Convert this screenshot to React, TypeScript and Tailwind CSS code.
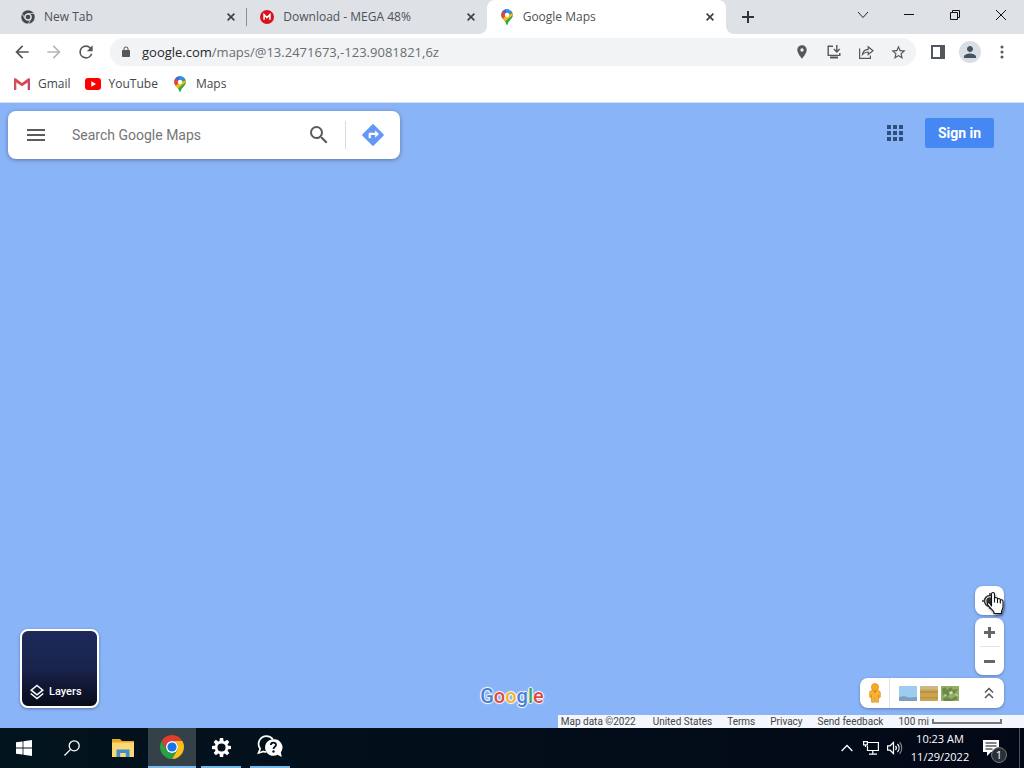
import React, { useId } from "react";

function Glyph({ d, className }: { d: string; className: string }) {
  return (
    <svg viewBox="0 0 24 24" className={className} fill="currentColor" aria-hidden="true">
      <path d={d} />
    </svg>
  );
}

const BACK = "M20 11H7.83l5.59-5.59L12 4l-8 8 8 8 1.41-1.41L7.83 13H20v-2z";
const FORWARD = "M12 4l-1.41 1.41L16.17 11H4v2h12.17l-5.58 5.59L12 20l8-8z";
const RELOAD =
  "M17.65 6.35A7.958 7.958 0 0 0 12 4a8 8 0 1 0 7.73 10h-2.08A6 6 0 1 1 12 6c1.66 0 3.14.69 4.22 1.78L13 11h7V4l-2.35 2.35z";
const LOCK =
  "M18 8h-1V6c0-2.76-2.24-5-5-5S7 3.24 7 6v2H6c-1.1 0-2 .9-2 2v10c0 1.1.9 2 2 2h12c1.1 0 2-.9 2-2V10c0-1.1-.9-2-2-2zm-2.9 0H8.9V6c0-1.71 1.39-3.1 3.1-3.1s3.1 1.39 3.1 3.1v2z";
const PLACE =
  "M12 2C8.13 2 5 5.13 5 9c0 5.25 7 13 7 13s7-7.75 7-13c0-3.87-3.13-7-7-7zm0 9.5a2.5 2.5 0 1 1 0-5 2.5 2.5 0 0 1 0 5z";
const STAR =
  "M22 9.24l-7.19-.62L12 2 9.19 8.63 2 9.24l5.46 4.73L5.82 21 12 17.27 18.18 21l-1.63-7.03L22 9.24zM12 15.4l-3.76 2.27 1-4.28-3.32-2.88 4.38-.38L12 6.1l1.71 4.04 4.38.38-3.32 2.88 1 4.28L12 15.4z";
const PERSON =
  "M12 12c2.21 0 4-1.79 4-4s-1.79-4-4-4-4 1.79-4 4 1.79 4 4 4zm0 2c-2.67 0-8 1.34-8 4v2h16v-2c0-2.66-5.33-4-8-4z";
const SEARCH =
  "M15.5 14h-.79l-.28-.27A6.471 6.471 0 0 0 16 9.5 6.5 6.5 0 1 0 9.5 16c1.61 0 3.09-.59 4.23-1.57l.27.28v.79l5 4.99L20.49 19l-4.99-5zm-6 0C7.01 14 5 11.99 5 9.5S7.01 5 9.5 5 14 7.01 14 9.5 11.99 14 9.5 14z";
const DIRECTIONS =
  "M21.71 11.29l-9-9a1 1 0 0 0-1.41 0l-9 9a1 1 0 0 0 0 1.41l9 9a1 1 0 0 0 1.41 0l9-9a1 1 0 0 0 0-1.41zM14 14.5V12h-4v3H8v-4c0-.55.45-1 1-1h5V7.5l3.5 3.5-3.5 3.5z";

const RED_ARC = "M12 6 L22.39 6 A12 12 0 0 0 1.61 6 L6.8 15 A6 6 0 0 1 12 6Z";
const YELLOW_ARC = "M17.2 15 L12 24 A12 12 0 0 0 22.39 6 L12 6 A6 6 0 0 1 17.2 15Z";
const GREEN_ARC = "M6.8 15 L1.61 6 A12 12 0 0 0 12 24 L17.2 15 A6 6 0 0 1 6.8 15Z";

function ChromeMono() {
  return (
    <svg viewBox="0 0 24 24" className="size-3.5 shrink-0" aria-hidden="true">
      <g fill="#43474b" stroke="#dee1e6" strokeWidth="1">
        <path d={RED_ARC} />
        <path d={YELLOW_ARC} />
        <path d={GREEN_ARC} />
      </g>
      <circle cx="12" cy="12" r="5.6" fill="#dee1e6" />
      <circle cx="12" cy="12" r="4" fill="#43474b" />
    </svg>
  );
}

function ChromeColor() {
  return (
    <svg viewBox="0 0 24 24" className="size-6" aria-hidden="true">
      <path d={RED_ARC} fill="#e33b2e" />
      <path d={YELLOW_ARC} fill="#fbc116" />
      <path d={GREEN_ARC} fill="#2c9f45" />
      <circle cx="12" cy="12" r="6" fill="#fff" />
      <circle cx="12" cy="12" r="4.6" fill="#1a73e8" />
    </svg>
  );
}

function MapsPin() {
  const id = useId();
  return (
    <svg viewBox="0 0 24 24" className="size-4 shrink-0" aria-hidden="true">
      <clipPath id={id}>
        <path d="M12 .5C7 .5 3.4 4.3 3.4 9c0 5.6 6.2 7.6 7.6 13.6.2 1.2 1.8 1.2 2 0C14.4 16.600 20.600 14.6 20.6 9 20.6 4.3 17 .5 12 .5z" />
      </clipPath>
      <g clipPath={`url(#${id})`}>
        <rect width="24" height="24" fill="#34a853" />
        <path d="M0 19L12 9 20.500-1H24V6L7.500 20z" fill="#fbbc04" />
        <path d="M12 9L20-1 26 4 24 14 14 24H9L24 6z" fill="#34a853" />
        <path d="M12 9L20-1H8z" fill="#4285f4" />
        <path d="M4 2.600L12 9 9-1z" fill="#1a73e8" />
        <path d="M4.800 2.500L12 9 3.500 16 0 8z" fill="#ea4335" />
        <path d="M12 9L18 1.500 20 5z" fill="#4285f4" />
      </g>
      <circle cx="12" cy="9" r="3.3" fill="#fff" />
    </svg>
  );
}

function MegaIcon() {
  return (
    <svg viewBox="0 0 24 24" className="size-3.5 shrink-0" aria-hidden="true">
      <circle cx="12" cy="12" r="12" fill="#d9131c" />
      <path d="M7 16.500V8l5 5 5-5v8.500" fill="none" stroke="#fff" strokeWidth="2.6" />
    </svg>
  );
}

function GmailIcon() {
  return (
    <svg viewBox="0 0 24 18" className="h-3 w-4" aria-hidden="true">
      <path d="M0 2.500V18h3.500V7z" fill="#c75460" />
      <path d="M24 2.500V18h-3.500V7z" fill="#b64e72" />
      <path d="M0 2C0 0 2 0 3.500 1L12 7.500 20.500 1C22 0 24 0 24 2v2.500L12 12.500 0 4.500z" fill="#d64a50" />
    </svg>
  );
}

function YouTubeIcon() {
  return (
    <svg viewBox="0 0 24 18" className="h-3 w-4" aria-hidden="true">
      <rect width="24" height="18" rx="4.500" fill="#f00" />
      <path d="M9.500 5v8l7-4z" fill="#fff" />
    </svg>
  );
}

function CloseMark() {
  return (
    <svg viewBox="0 0 8 8" className="size-2" fill="none" stroke="#3c4043" strokeWidth="1.6" aria-hidden="true">
      <path d="M.6.6l6.800 6.800M7.400.6L.6 7.400" />
    </svg>
  );
}

function Tab({ title, icon, active, divider }: { title: string; icon: React.ReactNode; active?: boolean; divider?: boolean }) {
  return (
    <div
      className={
        active
          ? "relative flex h-full min-w-0 flex-1 items-center gap-2 rounded-t-lg bg-white pr-[11px] pl-3"
          : "relative flex h-full min-w-0 flex-1 items-center gap-2 pr-[11px] pl-3"
      }
    >
      <button
        type="button"
        role="tab"
        aria-selected={!!active}
        className={active ? "flex min-w-0 flex-1 items-center gap-2 text-left" : "flex min-w-0 flex-1 items-center gap-[9px] pl-px text-left"}
      >
        {icon}
        <span className="truncate text-[12px] leading-4 text-[#4e5256]">{title}</span>
      </button>
      <button type="button" aria-label={`Close ${title}`} className="p-px">
        <CloseMark />
      </button>
      {divider && <span className="absolute top-2 right-0 h-[18px] w-px bg-[#8a8d91]" />}
      {active && (
        <>
          <span className="absolute bottom-0 -left-2 size-2 bg-white">
            <span className="block size-full rounded-br-lg bg-[#dee1e6]" />
          </span>
          <span className="absolute -right-2 bottom-0 size-2 bg-white">
            <span className="block size-full rounded-bl-lg bg-[#dee1e6]" />
          </span>
        </>
      )}
    </div>
  );
}

function TabStrip() {
  const win = "flex h-[30px] w-[46px] items-center justify-center";
  return (
    <header className="flex h-[34px] bg-[#dee1e6]">
      <div role="tablist" className="flex w-[726px] min-w-0 pl-2">
        <Tab title="New Tab" icon={<ChromeMono />} divider />
        <Tab title="Download - MEGA 48%" icon={<MegaIcon />} />
        <Tab title="Google Maps" icon={<MapsPin />} active />
      </div>
      <button type="button" aria-label="New tab" className="flex w-11 items-center justify-center">
        <svg viewBox="0 0 12 12" className="size-3" stroke="#303438" strokeWidth="2" aria-hidden="true">
          <path d="M6 0v12M0 6h12" />
        </svg>
      </button>
      <div className="ml-auto flex">
        <button type="button" aria-label="Search tabs" className={win}>
          <svg viewBox="0 0 12 12" className="size-3" fill="none" stroke="#222" aria-hidden="true">
            <path d="M1 3l5 5.500L11 3" />
          </svg>
        </button>
        <button type="button" aria-label="Minimize" className={win}>
          <svg viewBox="0 0 10 10" className="size-2.5" aria-hidden="true">
            <path d="M0 4h10v1H0z" fill="#111" />
          </svg>
        </button>
        <button type="button" aria-label="Restore" className={win}>
          <svg viewBox="0 0 10 10" className="size-2.5" fill="none" stroke="#111" aria-hidden="true">
            <path d="M.5 2.500h7v7h-7zM2.500 2.500v-2h7v7h-2" />
          </svg>
        </button>
        <button type="button" aria-label="Close" className={win}>
          <svg viewBox="0 0 10 10" className="size-2.5" stroke="#111" aria-hidden="true">
            <path d="M0 0l10 10M10 0L0 10" />
          </svg>
        </button>
      </div>
    </header>
  );
}

function ToolButton({ label, children }: { label: string; children: React.ReactNode }) {
  return (
    <button type="button" aria-label={label} className="flex h-7 w-8 shrink-0 items-center justify-center text-[#54585c]">
      {children}
    </button>
  );
}

function Toolbar() {
  return (
    <div className="flex h-9 items-center bg-white pr-1.5 pl-1.5">
      <ToolButton label="Back"><Glyph d={BACK} className="size-5" /></ToolButton>
      <button type="button" aria-label="Forward" disabled className="flex h-7 w-8 items-center justify-center text-[#b5b7ba]">
        <Glyph d={FORWARD} className="size-5" />
      </button>
      <ToolButton label="Reload"><Glyph d={RELOAD} className="size-5" /></ToolButton>
      <div className="ml-2 flex h-7 flex-1 items-center rounded-full bg-[#f1f3f4] pr-0.5 pl-2.5">
        <Glyph d={LOCK} className="size-3 text-[#54585c]" />
        <div
          role="textbox"
          aria-label="Address"
          tabIndex={0}
          className="ml-2.5 min-w-0 flex-1 truncate text-[13px] leading-5 text-[#6a6e72]"
        >
          <span className="text-[#26292c]">google.com</span>/maps/@13.2471673,-123.9081821,6z
        </div>
        <ToolButton label="Location"><Glyph d={PLACE} className="size-4" /></ToolButton>
        <ToolButton label="Install">
          <svg viewBox="0 0 16 16" className="size-4" fill="none" stroke="currentColor" strokeWidth="1.4" aria-hidden="true">
            <path d="M7 2.200H2.200v9.200h11.600V9M10.800 1v6.500M7.900 5l2.900 2.900L13.700 5" />
            <path d="M4 13.500h8" strokeWidth="2" />
          </svg>
        </ToolButton>
        <ToolButton label="Share">
          <svg viewBox="0 0 16 16" className="size-4" fill="none" stroke="currentColor" strokeWidth="1.2" aria-hidden="true">
            <path d="M1.600 4.500v9.900h10.800v-3M4.500 10.500c.5-3.500 2.500-5 5.700-5.200V2.800L15 6.700l-4.800 3.800V8c-2.500 0-4.200.6-5.700 2.500z" />
          </svg>
        </ToolButton>
        <ToolButton label="Bookmark"><Glyph d={STAR} className="size-[17px]" /></ToolButton>
      </div>
      <div className="ml-1.5 flex">
        <ToolButton label="Side panel">
          <svg viewBox="0 0 14 14" className="size-3.5" aria-hidden="true">
            <path d="M0 0h14v14H0zM2 2v10h7V2z" fill="currentColor" fillRule="evenodd" />
          </svg>
        </ToolButton>
        <ToolButton label="Profile">
          <span className="flex size-[22px] items-center justify-center rounded-full bg-[#d9dee4] text-[#46535f]">
            <Glyph d={PERSON} className="size-[18px]" />
          </span>
        </ToolButton>
        <ToolButton label="Menu">
          <svg viewBox="0 0 4 14" className="h-3.5 w-1" fill="currentColor" aria-hidden="true">
            <circle cx="2" cy="2" r="1.500" /><circle cx="2" cy="7" r="1.500" /><circle cx="2" cy="12" r="1.500" />
          </svg>
        </ToolButton>
      </div>
    </div>
  );
}

function Bookmarks() {
  const link = "flex items-center gap-2 text-[12px] leading-4 text-[#44484c]";
  return (
    <nav aria-label="Bookmarks" className="flex h-[33px] items-start gap-[14px] border-b border-[#d5e0f5] bg-white px-3.5 pt-1.5">
      <a href="#gmail" className={link}><GmailIcon />Gmail</a>
      <a href="#youtube" className={link}><YouTubeIcon />YouTube</a>
      <a href="#maps" className={link}><MapsPin />Maps</a>
    </nav>
  );
}

function SearchCard() {
  return (
    <form className="flex h-12 w-[392px] items-center rounded-lg bg-white shadow-[0_1px_4px_rgba(0,0,0,0.35)]" onSubmit={(e) => e.preventDefault()}>
      <button type="button" aria-label="Menu" className="flex w-14 justify-center">
        <svg viewBox="0 0 18 12" className="h-3 w-[18px]" fill="#5c5c5c" aria-hidden="true">
          <path d="M0 0h18v2H0zM0 5h18v2H0zM0 10h18v2H0z" />
        </svg>
      </button>
      <input
        type="text"
        aria-label="Search Google Maps"
        placeholder="Search Google Maps"
        className="ml-2 min-w-0 flex-1 bg-transparent text-[14px] leading-5 text-[#333] outline-none placeholder:text-[#757575]"
      />
      <button type="submit" aria-label="Search" className="flex w-[52px] justify-center">
        <Glyph d={SEARCH} className="size-6 text-[#5a5a5a]" />
      </button>
      <span className="h-7 w-px bg-[#dadce0]" />
      <button type="button" aria-label="Directions" className="flex w-[54px] justify-center text-[#6497f6]">
        <Glyph d={DIRECTIONS} className="size-[26px]" />
      </button>
    </form>
  );
}

function Pegman() {
  return (
    <svg viewBox="0 0 12 20" className="h-5 w-3" aria-hidden="true">
      <path d="M3 7.500h6c1.500 0 2.300 1 2.300 2.300V14c0 .8-1.300 1-1.600.2L9.500 12v7.200H6.600V15H5.400v4.200H2.500V12l-.2 2.200c-.3.800-1.600.6-1.600-.2V9.800C.7 8.500 1.500 7.500 3 7.500z" fill="#f9b233" stroke="#d98e1c" strokeWidth=".7" />
      <circle cx="6" cy="4.200" r="3.600" fill="#f7a922" stroke="#d98e1c" strokeWidth=".7" />
      <path d="M4.300 8.200L6 10l1.700-1.800z" fill="#c97a16" />
    </svg>
  );
}

function Thumbs() {
  return (
    <svg viewBox="0 0 60 15" className="h-[15px] w-[60px]" aria-hidden="true">
      <rect width="18" height="15" fill="#9ccdf0" />
      <path d="M0 11l5-1 5 1.500 8-.5v4H0z" fill="#7f9fbe" />
      <rect x="21" width="18" height="15" fill="#c9a552" />
      <path d="M21 0h18v3.500H21z" fill="#c9ba87" />
      <path d="M21 5h18v2H21zM21 11h18v1.500H21z" fill="#bb943f" />
      <rect x="42" width="18" height="15" fill="#94ad68" />
      <path d="M43 3l3-2 2 3 4-3 2 3 5-1-3 4-4 1-5 3-3-2zM44 12l5-1 3 2 5-3 2 3-6 2h-8z" fill="#6c8a46" />
      <path d="M50 6l3-1 1 2-3 2zM45 8l3 1-2 2zM56 9l2-1 1 2z" fill="#d3dcb0" />
    </svg>
  );
}

function HandCursor() {
  return (
    <svg viewBox="0 0 20 26" className="pointer-events-none absolute top-1 left-2.5 h-[26px] w-5 drop-shadow-[1px_2px_1px_rgba(0,0,0,0.4)]" aria-hidden="true">
      <path
        d="M6.500 16V4c0-2 3-2 3 0v5c0-2 3-2 3 0v1c0-2 2.800-2 2.800 0v1c0-1.800 2.700-1.600 2.700.3V17c0 2-1.500 3-1.500 5v1.500H9V22c-1.500-2-5-5-6.500-7.500-.8-1.500 1-2.500 2.300-1.200z"
        fill="#fff"
        stroke="#111"
        strokeWidth="1.1"
        strokeLinejoin="round"
      />
      <path d="M9.500 9v3.500M12.500 10v3M15.300 11v2.500" stroke="#111" strokeWidth="1.1" />
    </svg>
  );
}

function GoogleMark() {
  return (
    <div
      aria-label="Google"
      className="text-[20px] leading-6 font-medium [text-shadow:1px_0_1px_#fff,-1px_0_1px_#fff,0_1px_1px_#fff,0_-1px_1px_#fff]"
    >
      <span className="text-[#4a7fd8]">G</span>
      <span className="text-[#df4b43]">o</span>
      <span className="text-[#f0b429]">o</span>
      <span className="text-[#4a7fd8]">g</span>
      <span className="text-[#3ba55d]">l</span>
      <span className="text-[#df4b43]">e</span>
    </div>
  );
}

function MapView() {
  const card = "rounded-lg bg-white shadow-[0_1px_3px_rgba(0,0,0,0.3)]";
  return (
    <main className="flex flex-1 flex-col bg-[#8ab4f8] [font-family:Roboto,'Liberation_Sans',sans-serif]">
      <div className="flex items-start justify-between pt-2 pr-[30px] pl-2">
        <SearchCard />
        <div className="flex items-center gap-[22px] pt-[7px]">
          <button type="button" aria-label="Google apps">
            <svg viewBox="0 0 16 16" className="size-4" fill="#304e7c" aria-hidden="true">
              <path d="M0 0h4v4H0zM6 0h4v4H6zM12 0h4v4h-4zM0 6h4v4H0zM6 6h4v4H6zM12 6h4v4h-4zM0 12h4v4H0zM6 12h4v4H6zM12 12h4v4h-4z" />
            </svg>
          </button>
          <a href="#signin" className="flex h-[30px] w-[69px] items-center justify-center rounded-xs bg-[#4688f3] text-[14px] font-bold text-white">
            Sign in
          </a>
        </div>
      </div>

      <div className="mt-auto grid grid-cols-3 items-end pr-5 pb-[7px] pl-5">
        <button
          type="button"
          className="flex size-[79px] items-end gap-1 rounded-lg border-2 border-white bg-linear-to-b from-[#1d2a5a] via-[#19234c] to-[#080c1b] pb-1.5 pl-[7px] text-[11px] leading-4 font-medium text-white shadow-[0_1px_3px_rgba(0,0,0,0.35)]"
        >
          <svg viewBox="0 0 16 16" className="size-4" fill="none" stroke="#fff" strokeWidth="1.5" aria-hidden="true">
            <path d="M8 1.500l5.800 4.700L8 10.900 2.200 6.200zM1.700 9.500L8 14.500l6.300-5" />
          </svg>
          Layers
        </button>
        <div className="flex justify-center">
          <GoogleMark />
        </div>
        <div className="flex flex-col items-end gap-[3px]">
          <div className="relative">
            <button type="button" aria-label="Show your location" className={`${card} flex size-[29px] items-center justify-center`}>
              <svg viewBox="0 0 16 16" className="size-4" fill="none" stroke="#333" strokeWidth="1.5" aria-hidden="true">
                <circle cx="8" cy="8" r="5.500" />
                <circle cx="8" cy="8" r="3" fill="#333" />
                <path d="M8 0v3M8 13v3M0 8h3M13 8h3" />
              </svg>
            </button>
            <HandCursor />
          </div>
          <div className={`${card} flex w-[29px] flex-col items-center`}>
            <button type="button" aria-label="Zoom in" className="flex h-7 w-full items-center justify-center">
              <svg viewBox="0 0 11 11" className="size-[11px]" fill="#666" aria-hidden="true">
                <path d="M4 0h3v4h4v3H7v4H4V7H0V4h4z" />
              </svg>
            </button>
            <span className="h-px w-5 bg-[#e3e3e3]" />
            <button type="button" aria-label="Zoom out" className="flex h-7 w-full items-center justify-center">
              <svg viewBox="0 0 11 3" className="h-[3px] w-[11px]" fill="#666" aria-hidden="true">
                <path d="M0 0h11v3H0z" />
              </svg>
            </button>
          </div>
          <div className={`${card} flex h-[30px] w-36 items-center`}>
            <button type="button" aria-label="Street View" className="flex h-full w-[30px] items-center justify-center border-r border-[#e3e3e3]">
              <Pegman />
            </button>
            <button type="button" aria-label="Imagery" className="ml-[9px]"><Thumbs /></button>
            <button type="button" aria-label="Expand imagery" className="mr-[9px] ml-auto">
              <svg viewBox="0 0 12 12" className="size-3" fill="none" stroke="#555" strokeWidth="1.5" aria-hidden="true">
                <path d="M2 5.500l4-4 4 4M2 11l4-4 4 4" />
              </svg>
            </button>
          </div>
        </div>
      </div>

      <footer className="ml-auto flex h-[13px] items-center gap-[15px] bg-[#f3f6fc] pr-[22px] pl-[3px] text-[10px] leading-[13px] text-[#444]">
        <span className="pr-0.5">Map data ©2022</span>
        <a href="#country">United States</a>
        <a href="#terms">Terms</a>
        <a href="#privacy">Privacy</a>
        <a href="#feedback">Send feedback</a>
        <span className="flex items-center gap-[3px]">
          100 mi
          <span className="h-[5px] w-[70px] border-2 border-t-0 border-[#777]" />
        </span>
      </footer>
    </main>
  );
}

const GEAR_ANGLES = [0, 45, 90, 135, 180, 225, 270, 315];

function Taskbar() {
  const cell = "flex h-10 w-12 items-center justify-center";
  return (
    <footer className="flex h-10 items-center bg-linear-to-r from-[#02141d] to-[#030817] text-white">
      <button type="button" aria-label="Start" className={cell}>
        <svg viewBox="0 0 16 16" className="size-4" fill="#fff" aria-hidden="true">
          <path d="M0 2.300l6.600-.9v6.200H0zM7.400 1.300L16 0v7.600H7.400zM0 8.400h6.600v6.200L0 13.700zM7.400 8.400H16V16l-8.600-1.300z" />
        </svg>
      </button>
      <button type="button" aria-label="Search" className={cell}>
        <svg viewBox="0 0 16 16" className="size-4" fill="none" stroke="#fff" strokeWidth="1.3" aria-hidden="true">
          <circle cx="10.200" cy="5.800" r="5" />
          <path d="M6.600 9.400L.5 15.500" />
        </svg>
      </button>
      <div className="ml-[3px] flex gap-px">
        <button type="button" aria-label="File Explorer" className={cell}>
          <svg viewBox="0 0 22 18" className="h-[18px] w-[22px]" aria-hidden="true">
            <path d="M0 0h8l2 2h12v4H0z" fill="#e8a825" />
            <path d="M0 3.500h22V18H0z" fill="#fbd872" />
            <path d="M4.500 10.500h13V18h-3.700v-4H8.200v4H4.500z" fill="#3d8fcf" />
          </svg>
        </button>
        <button type="button" aria-label="Google Chrome" className={`${cell} border-b-2 border-[#76b9ed] bg-[#344149]`}>
          <ChromeColor />
        </button>
        <button type="button" aria-label="Settings" className={`${cell} flex-col px-1`}>
          <span className="flex h-[38px] items-center">
            <svg viewBox="0 0 20 20" className="size-[19px]" aria-hidden="true">
              <circle cx="10" cy="10" r="5.700" fill="none" stroke="#fff" strokeWidth="2.8" />
              {GEAR_ANGLES.map((a) => (
                <path key={a} d="M8.300 0h3.400l.5 4H7.800z" fill="#fff" transform={`rotate(${a} 10 10)`} />
              ))}
            </svg>
          </span>
          <span className="h-0.5 w-full bg-[#76b9ed]" />
        </button>
        <button type="button" aria-label="Get Help" className={`${cell} flex-col px-1`}>
          <span className="flex h-[38px] items-center">
            <svg viewBox="0 0 26 24" className="h-6 w-[26px]" aria-hidden="true">
              <path d="M9.500 1.200a7.800 7.800 0 0 0-6.300 12.500L1.500 18l5-1.500a8 8 0 0 0 3 .5M9.500 1.200a8 8 0 0 1 6.500 3.300" fill="none" stroke="#fff" strokeWidth="1.7" />
              <path d="M16.500 4.200a8.300 8.300 0 1 0 4 15.500l4.300 2.300-1-4.600a8.300 8.300 0 0 0-7.300-13.200z" fill="#fff" />
              <path d="M13.800 10c.2-3.400 5.400-3 5.200 0-.1 1.800-2.500 1.800-2.500 4" fill="none" stroke="#07141e" strokeWidth="1.8" />
              <circle cx="16.500" cy="16.500" r="1.200" fill="#07141e" />
            </svg>
          </span>
          <span className="h-0.5 w-full bg-[#76b9ed]" />
        </button>
      </div>

      <div className="ml-auto flex h-full items-center">
        <button type="button" aria-label="Show hidden icons" className="flex w-6 justify-center">
          <svg viewBox="0 0 12 8" className="h-2 w-3" fill="none" stroke="#fff" strokeWidth="1.3" aria-hidden="true">
            <path d="M.6 7L6 1.500 11.400 7" />
          </svg>
        </button>
        <button type="button" aria-label="Network" className="flex w-6 justify-center">
          <svg viewBox="0 0 16 14" className="h-3.5 w-4" fill="none" stroke="#fff" strokeWidth="1.2" aria-hidden="true">
            <path d="M5 1.500h10.400v8H4.500V5M.6.600h3.800v3.200H.6zM2.500 4v2M9.800 9.500V13M6 13.200h8" />
          </svg>
        </button>
        <button type="button" aria-label="Volume" className="flex w-6 justify-center">
          <svg viewBox="0 0 16 14" className="h-3.5 w-4" fill="none" stroke="#fff" strokeWidth="1.2" aria-hidden="true">
            <path d="M.6 4.800h2.500L6.500 1.500v11L3.100 9.200H.6zM8.500 5a3 3 0 0 1 0 4M10.500 3a6 6 0 0 1 0 8" />
            <path d="M12.600 1.200a9 9 0 0 1 0 11.600" opacity=".5" />
          </svg>
        </button>
        <button type="button" className="flex w-[66px] flex-col items-center text-[11px] leading-[18px]">
          <time>10:23 AM</time>
          <time>11/29/2022</time>
        </button>
        <button type="button" aria-label="1 new notification" className="relative ml-2.5 flex h-10 w-8 items-center">
          <svg viewBox="0 0 16 16" className="size-4" aria-hidden="true">
            <path d="M0 0h16v12H8l-4 4v-4H0z" fill="#fff" />
            <path d="M2.500 3h11M2.500 6h11M2.500 9h7" stroke="#07101e" strokeWidth="1.2" />
          </svg>
          <span className="absolute top-[19px] left-2 flex size-4 items-center justify-center rounded-full border border-[#777] bg-[#2b2f38] text-[11px] leading-3">
            1
          </span>
        </button>
        <span className="mr-1 ml-1 h-full w-px bg-[#4a505c]" />
      </div>
    </footer>
  );
}

export default function App() {
  return (
    <div className="flex min-h-screen flex-col [font-family:'Open_Sans','Noto_Sans',sans-serif]">
      <TabStrip />
      <Toolbar />
      <Bookmarks />
      <MapView />
      <Taskbar />
    </div>
  );
}
